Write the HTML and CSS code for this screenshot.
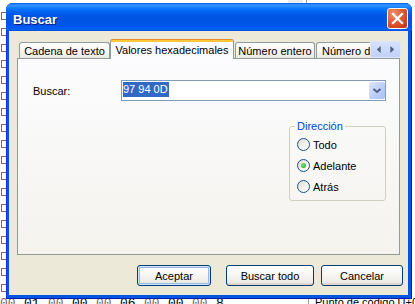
FILE: index.html
```html
<!DOCTYPE html>
<html lang="es">
<head>
<meta charset="utf-8">
<title>Buscar</title>
<link rel="stylesheet" href="styles.css">
</head>
<body>
<div class="desk">
	<div class="marks">
		<span></span><span></span><span></span><span></span><span></span><span></span>
		<span></span><span></span><span></span><span></span><span></span><span></span>
		<span></span><span></span><span></span><span></span><span></span><span></span>
	</div>
	<div class="hexrow">
		<span class="nul">00</span><span>01</span><span class="nul">00</span><span>00</span><span class="nul">00</span>
		<span>06</span><span class="nul">00</span><span>00</span><span class="nul">00</span><span>8</span>
	</div>
	<div class="topstub"></div>
	<div class="topline"></div>
	<div class="status">Punto de código U+0000</div>
</div>

<div class="win">
	<div class="titlebar">
		<span class="title">Buscar</span>
		<span class="close">
			<svg width="19" height="19" viewBox="0 0 19 19"><path d="M5 5 L14 14 M14 5 L5 14" stroke="#fff" stroke-width="2.2" stroke-linecap="square"/></svg>
		</span>
	</div>
	<div class="client">
		<div class="tabs">
			<div class="tab-strip">
				<div class="tab t1">Cadena de texto</div>
				<div class="tab active">Valores hexadecimales</div>
				<div class="tab t3">Número entero</div>
				<div class="tab t4">Número de coma flotante</div>
			</div>
			<div class="tab-scroll">
				<svg width="30" height="15" viewBox="0 0 30 15"><path d="M10 4 L6 7.5 L10 11 Z" fill="#4d6185"/><path d="M20 4 L24 7.5 L20 11 Z" fill="#4d6185"/></svg>
			</div>
		</div>
		<div class="panel">
			<div class="form">
				<div class="field">
					<span class="label">Buscar:</span>
					<div class="combo">
						<span class="sel">97 94 0D</span>
						<span class="drop"><svg width="16" height="17" viewBox="0 0 16 17"><path d="M4.5 7 L8 10 L11.5 7" fill="none" stroke="#4d6185" stroke-width="2"/></svg></span>
					</div>
				</div>
				<fieldset class="group">
					<legend>Dirección</legend>
					<div class="radio"><span class="dot"></span>Todo</div>
					<div class="radio"><span class="dot on"></span>Adelante</div>
					<div class="radio"><span class="dot"></span>Atrás</div>
				</fieldset>
			</div>
		</div>
		<div class="buttons">
			<span class="btn def b1">Aceptar</span>
			<span class="btn b2">Buscar todo</span>
			<span class="btn b3">Cancelar</span>
		</div>
	</div>
</div>
</body>
</html>
```

FILE: styles.css
```css
*{margin:0;padding:0;box-sizing:border-box;}
body{width:415px;height:304px;background:#fff;position:relative;overflow:hidden;font-family:"Liberation Sans",Arial,sans-serif;font-size:11px;color:#000;}

/* app behind the dialog */
.desk{position:absolute;left:0;top:0;width:415px;height:304px;}
.marks{display:flex;flex-direction:column;gap:8px;padding:12px 0 0 1px;}
.marks span{display:block;width:7px;height:8px;border:1px solid #866464;}
.hexrow{position:absolute;left:0;top:297px;display:flex;font:13px/13px "Liberation Mono",monospace;}
.hexrow span{width:24px;flex:none;color:#000;}
.hexrow .nul{color:#8a6060;}
.topstub{position:absolute;left:288px;top:0;width:15px;height:3px;background:#ececec;}
.topline{position:absolute;left:306px;top:0;width:1px;height:3px;background:#a0a0a0;}
.status{position:absolute;left:308px;top:296px;border-left:1px solid #a0a0a0;padding-left:6px;line-height:13px;white-space:nowrap;}

/* window */
.win{position:absolute;left:6px;top:3px;width:406px;height:296px;display:flex;flex-direction:column;background:#0055e5;border-radius:7px 7px 0 0;box-shadow:inset 1px 0 #0831d9,inset -1px 0 #001ea0,inset 0 -1px #001ea0;}
.titlebar{height:28px;flex:none;display:flex;justify-content:space-between;align-items:flex-start;padding:0 4px 0 7px;border-radius:7px 7px 0 0;background:linear-gradient(#0058ee 0,#3a93ff 2px,#288eff 3px,#127dff 5px,#036ffc 7px,#0262ee 9px,#0057e5 12px,#0054e3 60%,#0055eb 80%,#005bf5 90%,#0260f0 95%,#004ad6 100%);}
.title{color:#fff;font:bold 13px/21px "Liberation Sans",Arial,sans-serif;padding-top:6px;text-shadow:1px 1px 0 #0a1a80;}
.close{width:21px;height:21px;margin-top:5px;border:1px solid #fff;border-radius:3px;background:radial-gradient(circle at 30% 25%,#f19377 0,#e2603a 40%,#cf3f15 80%,#b8330d 100%);display:flex;align-items:center;justify-content:center;}
.close svg{display:block;}

.client{flex:1;margin:0 4px 4px 3px;background:#ece9d8;padding:8px 0 0 8px;display:flex;flex-direction:column;}

/* tabs */
.tabs{width:384px;height:20px;display:flex;align-items:flex-end;background:linear-gradient(#919b9c,#919b9c) left bottom/383px 1px no-repeat;}
.tab-strip{width:353px;height:20px;flex:none;display:flex;align-items:flex-end;overflow:hidden;padding-left:2px;}
.tab{flex:none;height:16px;margin-bottom:1px;border:1px solid #919b9c;border-bottom:0;border-radius:3px 3px 0 0;background:linear-gradient(#fefefe,#f6f5f1 60%,#e9e8e1);text-align:center;line-height:14px;padding-top:1px;white-space:nowrap;overflow:hidden;}
.t1{width:91px;}
.active{width:124px;height:20px;margin-bottom:0;padding-top:4px;border-top:0;border-color:#919b9c;border-radius:3px 3px 0 0;background:linear-gradient(#e68b2c 0,#e68b2c 1px,#ffc73c 1px,#ffc73c 3px,#fcfcfe 3px);position:relative;}
.t3{width:80px;margin-left:1px;}
.t4{width:140px;margin-left:1px;text-align:left;padding-left:5px;}
.tab-scroll{width:31px;height:17px;margin-bottom:1px;border:1px solid #dde6fb;border-radius:2px;background:linear-gradient(#d6e1fc,#c0d1f8);display:flex;align-items:center;justify-content:center;}
.tab-scroll svg{display:block;}

.panel{width:383px;height:196px;border:1px solid #919b9c;border-top:0;background:linear-gradient(#fcfcfe,#f4f3ee);padding:21px 0 0 15px;}
.form{width:353px;display:flex;flex-direction:column;align-items:flex-end;}
.field{width:353px;display:flex;align-items:center;}
.label{width:88px;flex:none;}
.combo{width:265px;height:21px;border:1px solid #7f9db9;background:#fff;display:flex;padding-left:1px;}
.sel{align-self:flex-start;margin-top:1px;height:15px;line-height:15px;background:#316ac5;color:#fff;padding-right:1px;}
.drop{margin:1px 0 1px auto;width:16px;height:17px;border-radius:2px;background:linear-gradient(135deg,#dfe8fd,#b9cdf7 60%,#aac1f4);}
.drop svg{display:block;}

.group{margin-top:19px;width:97px;height:81px;border:1px solid #d0d0bf;border-radius:3px;padding:1px 0 0 7px;}
.group legend{color:#0046d5;line-height:13px;padding:0 2px;margin-left:-2px;}
.radio{height:21px;display:flex;align-items:center;}
.dot{width:13px;height:13px;margin-right:3px;border:1px solid #1c5180;border-radius:50%;background:linear-gradient(135deg,#dcdbd3,#f4f3ef 60%,#fff);display:flex;align-items:center;justify-content:center;}
.dot.on::after{content:"";width:5px;height:5px;border-radius:50%;background:radial-gradient(circle at 40% 35%,#7fe07c,#21a121);}

/* buttons */
.buttons{margin-top:10px;display:flex;justify-content:flex-end;padding-right:5px;}
.btn{height:21px;border:1px solid #003c74;border-radius:3px;background:linear-gradient(#fff,#f7f7f4 45%,#ecebe6 85%,#d6d0c5);display:flex;align-items:center;justify-content:center;box-shadow:inset 0 -1px 0 #d8d2c6;}
.def{box-shadow:inset 0 0 0 1px #cee7ff,inset 0 0 0 2px #98b8ea;}
.b1{width:74px;margin-right:15px;}
.b2{width:88px;margin-right:7px;}
.b3{width:82px;}
```
